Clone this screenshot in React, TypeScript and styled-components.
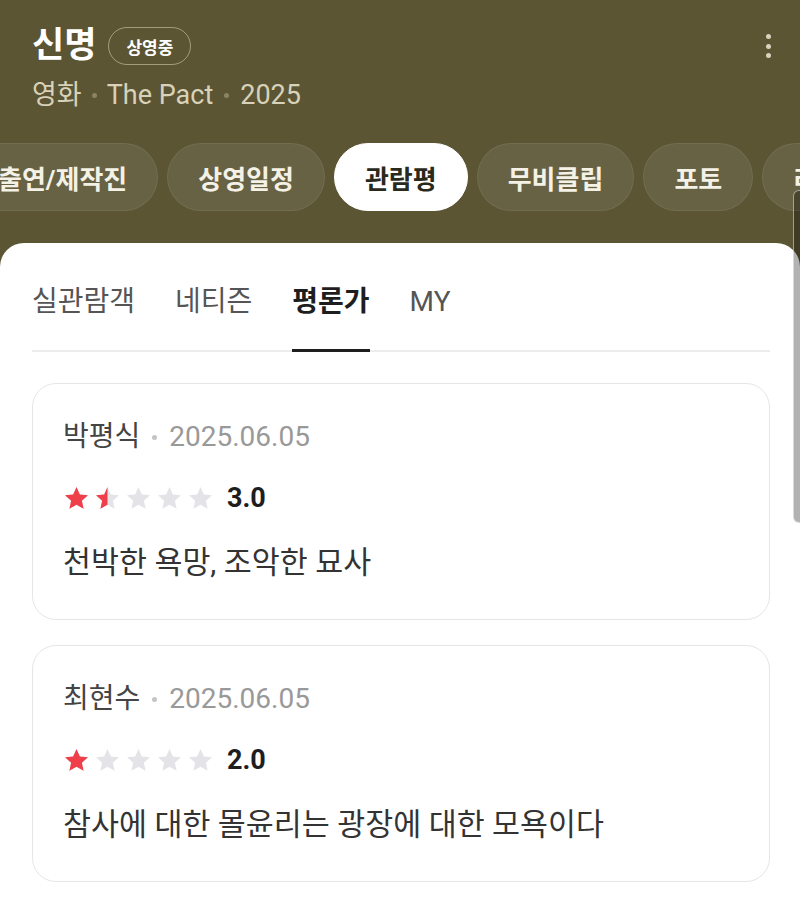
import React, {FC} from 'react';
import styled, {createGlobalStyle} from 'styled-components';

const GlobalStyle = createGlobalStyle`
  html, body {
    margin: 0;
    padding: 0;
    background: #ffffff;
  }
  body {
    font-family: Roboto, "Noto Sans CJK KR", sans-serif;
  }
`;

type Review = {
  author: string;
  date: string;
  score: number;
  comment: string;
};

const reviews: Review[] = [
  {author: '박평식', date: '2025.06.05', score: 3.0, comment: '천박한 욕망, 조악한 묘사'},
  {author: '최현수', date: '2025.06.05', score: 2.0, comment: '참사에 대한 몰윤리는 광장에 대한 모욕이다'},
];

const chips = ['출연/제작진', '상영일정', '관람평', '무비클립', '포토', '리뷰'];
const tabs = ['실관람객', '네티즌', '평론가', 'MY'];

const STAR_PATH =
  'M12 1.8l3 6.6 7.2.8-5.4 4.9 1.5 7.1L12 17.6l-6.3 3.6 1.5-7.1L1.8 9.2 9 8.4z';

const Star: FC<{fill: number; id: string}> = ({fill, id}) => (
  <svg width="27" height="27" viewBox="0 0 24 24">
    <defs>
      <clipPath id={id}>
        <rect x="0" y="0" width={24 * fill} height="24" />
      </clipPath>
    </defs>
    <path d={STAR_PATH} fill="#e4e4e8" />
    {fill > 0 && <path d={STAR_PATH} fill="#ee3f4b" clipPath={`url(#${id})`} />}
  </svg>
);

const Stars: FC<{score: number; idx: number}> = ({score, idx}) => {
  const filled = score / 2;
  return (
    <StarRow>
      {[0, 1, 2, 3, 4].map((i) => (
        <Star key={i} id={`star-${idx}-${i}`} fill={Math.max(0, Math.min(1, filled - i))} />
      ))}
    </StarRow>
  );
};

const ReviewCard: FC<{review: Review; idx: number}> = ({review, idx}) => (
  <Card>
    <Meta>
      {review.author}
      <Dot $color="#c4c4c4" $gap={12} />
      <DateText>{review.date}</DateText>
    </Meta>
    <RatingLine>
      <Stars score={review.score} idx={idx} />
      <Score>{review.score.toFixed(1)}</Score>
    </RatingLine>
    <Comment>{review.comment}</Comment>
  </Card>
);

export default function App() {
  return (
    <Page>
      <GlobalStyle />
      <Header>
        <TitleRow>
          <Title>신명</Title>
          <Badge>상영중</Badge>
          <Kebab aria-label="more">
            <span />
            <span />
            <span />
          </Kebab>
        </TitleRow>
        <Subtitle>
          영화
          <Dot $color="#8a8462" $gap={10} />
          The Pact
          <Dot $color="#8a8462" $gap={11} />
          2025
        </Subtitle>
      </Header>
      <ChipRow>
        {chips.map((c) => (
          <Chip key={c} $active={c === '관람평'}>
            {c}
          </Chip>
        ))}
      </ChipRow>
      <Sheet>
        <TabBar>
          {tabs.map((t) => (
            <Tab key={t} $active={t === '평론가'}>
              {t}
            </Tab>
          ))}
        </TabBar>
        <CardList>
          {reviews.map((r, i) => (
            <ReviewCard key={r.author} review={r} idx={i} />
          ))}
        </CardList>
      </Sheet>
      <ScrollThumb />
    </Page>
  );
}

const Page = styled.div`
  position: relative;
  min-height: 100vh;
  display: flex;
  flex-direction: column;
  background: #5b5534;
  overflow: hidden;
`;

const Header = styled.div`
  padding: 26px 32px 0;
`;

const TitleRow = styled.div`
  display: flex;
  align-items: center;
  height: 40px;
`;

const Title = styled.h1`
  margin: 0;
  font-size: 35px;
  font-weight: 700;
  color: #ffffff;
  line-height: 40px;
`;

const Badge = styled.span`
  margin-left: 12px;
  height: 38px;
  box-sizing: border-box;
  padding: 0 17px;
  display: inline-flex;
  align-items: center;
  border: 1.5px solid rgba(236, 228, 196, 0.5);
  border-radius: 19px;
  font-size: 17px;
  font-weight: 700;
  color: #ffffff;
`;

const Kebab = styled.div`
  margin-left: auto;
  margin-right: -3px;
  display: flex;
  flex-direction: column;
  gap: 4.5px;
  span {
    width: 5px;
    height: 5px;
    border-radius: 50%;
    background: #d8d3bd;
  }
`;

const Subtitle = styled.div`
  margin-top: 12px;
  display: flex;
  align-items: center;
  font-size: 27px;
  line-height: 34px;
  color: #d8d2ba;
`;

const Dot = styled.span<{$color: string; $gap: number}>`
  display: inline-block;
  width: 5px;
  height: 5px;
  border-radius: 50%;
  margin: 0 ${(p) => p.$gap}px;
  background: ${(p) => p.$color};
`;

const ChipRow = styled.div`
  display: flex;
  gap: 9px;
  margin-top: 31px;
  margin-left: -33px;
  white-space: nowrap;
`;

const Chip = styled.div<{$active: boolean}>`
  flex: none;
  height: 68px;
  box-sizing: border-box;
  padding: 0 30px;
  display: flex;
  align-items: center;
  border-radius: 34px;
  font-size: 26px;
  font-weight: 700;
  color: ${(p) => (p.$active ? '#2a2a1c' : '#f4f1e6')};
  background: ${(p) => (p.$active ? '#ffffff' : 'rgba(255, 255, 255, 0.08)')};
  border: 1px solid ${(p) => (p.$active ? '#ffffff' : 'rgba(255, 255, 255, 0.07)')};
`;

const Sheet = styled.div`
  flex: 1;
  margin-top: 32px;
  background: #ffffff;
  border-radius: 24px 24px 0 0;
  padding: 40px 30px 20px 32px;
`;

const TabBar = styled.div`
  display: flex;
  gap: 40px;
  border-bottom: 2px solid #ededed;
`;

const Tab = styled.div<{$active: boolean}>`
  font-size: 28px;
  line-height: 38px;
  padding-bottom: 28px;
  margin-bottom: -2px;
  border-bottom: 3px solid ${(p) => (p.$active ? '#1e1e1e' : 'transparent')};
  font-weight: ${(p) => (p.$active ? 700 : 400)};
  color: ${(p) => (p.$active ? '#1e1e1e' : '#555555')};
`;

const CardList = styled.div`
  display: flex;
  flex-direction: column;
  gap: 25px;
  margin-top: 31px;
`;

const Card = styled.div`
  border: 1px solid #e6e6e6;
  border-radius: 24px;
  padding: 36px 30px;
`;

const Meta = styled.div`
  display: flex;
  align-items: center;
  font-size: 28px;
  line-height: 34px;
  color: #444444;
`;

const DateText = styled.span`
  color: #999999;
`;

const RatingLine = styled.div`
  margin-top: 29px;
  height: 30px;
  display: flex;
  align-items: center;
`;

const StarRow = styled.div`
  display: flex;
  gap: 4px;
`;

const Score = styled.span`
  margin-left: 13px;
  font-size: 27px;
  font-weight: 700;
  color: #1e1e1e;
`;

const Comment = styled.div`
  margin-top: 30px;
  font-size: 30.4px;
  line-height: 40px;
  color: #333333;
`;

const ScrollThumb = styled.div`
  position: absolute;
  top: 190px;
  right: 0;
  width: 6px;
  height: 331px;
  border-radius: 6px 0 0 6px;
  background: rgba(0, 0, 0, 0.3);
  border: 1px solid rgba(255, 255, 255, 0.5);
  border-right: none;
`;
